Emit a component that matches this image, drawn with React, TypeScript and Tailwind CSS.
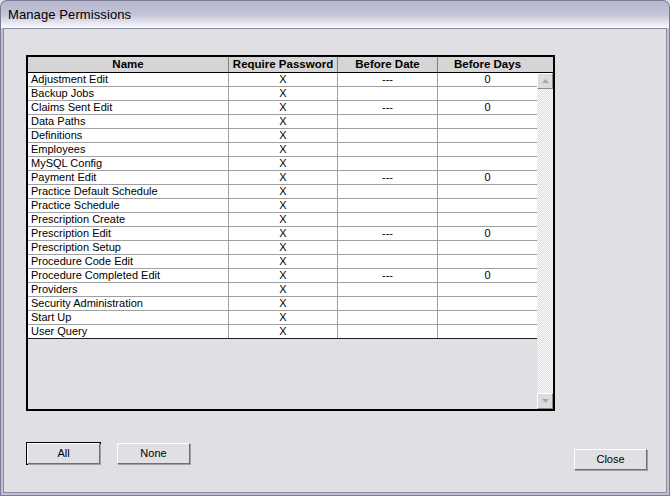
import React from "react";

type Row = { name: string; date?: string; days?: string };

const rows: Row[] = [
  { name: "Adjustment Edit", date: "---", days: "0" },
  { name: "Backup Jobs" },
  { name: "Claims Sent Edit", date: "---", days: "0" },
  { name: "Data Paths" },
  { name: "Definitions" },
  { name: "Employees" },
  { name: "MySQL Config" },
  { name: "Payment Edit", date: "---", days: "0" },
  { name: "Practice Default Schedule" },
  { name: "Practice Schedule" },
  { name: "Prescription Create" },
  { name: "Prescription Edit", date: "---", days: "0" },
  { name: "Prescription Setup" },
  { name: "Procedure Code Edit" },
  { name: "Procedure Completed Edit", date: "---", days: "0" },
  { name: "Providers" },
  { name: "Security Administration" },
  { name: "Start Up" },
  { name: "User Query" },
];

function Btn({ label, def }: { label: string; def?: boolean }) {
  return (
    <div className={def ? "border border-black" : ""}>
      <div className="w-[73px] h-[21px] border-t border-l border-white border-r border-b border-r-[#6f6f6f] border-b-[#6f6f6f] shadow-[1px_1px_0_#a0a0a0] flex items-center justify-center text-[11px] text-black bg-[#e0dfe3]">
        {label}
      </div>
    </div>
  );
}

export default function App() {
  return (
    <div
      className="w-[670px] h-[496px] bg-[#e0dfe3] flex flex-col overflow-hidden"
      style={{ fontFamily: '"Liberation Sans", Arial, sans-serif' }}
    >
      {/* Title bar */}
      <div className="h-[28px] shrink-0 rounded-t-[7px] border border-b-0 border-[#7b7b93] bg-gradient-to-b from-[#b6b6cc] via-[#c4c4d8] to-[#fbfbfd] flex items-center pl-[7px]">
        <span className="text-[13px] text-black tracking-[0.1px]">Manage Permissions</span>
      </div>
      {/* Body frame */}
      <div className="flex-1 border-x border-b border-[#7b7b93] flex flex-col">
        <div className="flex-1 border-x-[2px] border-b-[2px] border-[#c0c0d6] flex flex-col">
          <div className="flex-1 border border-[#8a8aa0] bg-[#e0dfe3] flex flex-col pl-[22px] pr-[19px] pt-[26px] pb-[20px]">
            {/* Grid */}
            <div className="w-[529px] h-[356px] border-2 border-black bg-[#e0dfe3] flex flex-col">
              {/* Header */}
              <div className="flex h-[16px] bg-[#d6d6d6] border-b border-black text-[11.5px] font-bold text-black shrink-0">
                <div className="w-[201px] border-r border-[#808080] flex items-center justify-center">Name</div>
                <div className="w-[109px] border-r border-[#808080] flex items-center justify-center whitespace-nowrap">Require Password</div>
                <div className="w-[100px] border-r border-[#808080] flex items-center justify-center">Before Date</div>
                <div className="w-[99px] flex items-center justify-center">Before Days</div>
                <div className="flex-1" />
              </div>
              <div className="flex flex-1 min-h-0">
                <div className="flex-1 flex flex-col">
                  {rows.map((r, i) => (
                    <div
                      key={r.name}
                      className={
                        "flex h-[14px] bg-white text-[11px] text-black leading-[13px] border-b " +
                        (i === rows.length - 1 ? "border-[#202020]" : "border-[#a0a0a0]")
                      }
                    >
                      <div className="w-[201px] border-r border-[#a0a0a0] pl-[3px] whitespace-nowrap">{r.name}</div>
                      <div className="w-[109px] border-r border-[#a0a0a0] text-center">X</div>
                      <div className="w-[100px] border-r border-[#a0a0a0] text-center">{r.date ?? ""}</div>
                      <div className="flex-1 text-center">{r.days ?? ""}</div>
                    </div>
                  ))}
                </div>
                {/* Scrollbar */}
                <div
                  className="w-[16px] flex flex-col justify-between"
                  style={{
                    backgroundColor: "#f4f4f4",
                    backgroundImage:
                      "repeating-conic-gradient(#e0dfe3 0% 25%, #f8f8f8 0% 50%)",
                    backgroundSize: "2px 2px",
                  }}
                >
                  <div className="h-[16px] bg-[#dcdcdc] border-t border-l border-white border-r border-b border-r-[#8c8c8c] border-b-[#8c8c8c] flex items-center justify-center">
                    <svg width="7" height="4" viewBox="0 0 7 4">
                      <polygon points="0,4 3.5,0 7,4" fill="#a8a8b0" />
                    </svg>
                  </div>
                  <div className="h-[16px] bg-[#dcdcdc] border-t border-l border-white border-r border-b border-r-[#8c8c8c] border-b-[#8c8c8c] flex items-center justify-center">
                    <svg width="7" height="4" viewBox="0 0 7 4">
                      <polygon points="0,0 3.5,4 7,0" fill="#a8a8b0" />
                    </svg>
                  </div>
                </div>
              </div>
            </div>
            {/* Buttons */}
            <div className="flex items-start mt-[31px]">
              <Btn label="All" def />
              <div className="ml-[16px] mt-[1px]">
                <Btn label="None" />
              </div>
              <div className="ml-auto mt-[7px]">
                <Btn label="Close" />
              </div>
            </div>
          </div>
        </div>
      </div>
    </div>
  );
}
